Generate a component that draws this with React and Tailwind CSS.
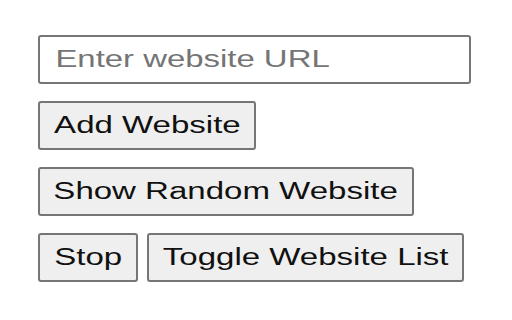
import React, { useState } from 'react';

const font = { fontFamily: '"Liberation Sans", Arial, sans-serif' };

// text in the popup is drawn wider than tall, so each label is stretched on x
const Label = ({ children }) => (
    <span className="inline-block scale-x-[1.405] origin-center whitespace-nowrap text-[23.5px] leading-none text-[#111]">
        {children}
    </span>
);

const Btn = ({ children, className }) => (
    <button
        className={`h-[49px] flex items-center justify-center bg-[#efefef] border-2 border-[#767676] rounded-[3px] ${className}`}
    >
        <Label>{children}</Label>
    </button>
);

const App = () => {
    const [url, setUrl] = useState('');

    return (
        <div className="w-[512px] h-[320px] bg-white pl-[38px] pt-[35px]" style={font}>
            <div className="flex flex-col gap-[17px]">
                {/* URL input */}
                <div className="w-[433px] h-[49px] flex items-center border-2 border-[#767676] rounded-[3px] bg-white">
                    <input
                        type="text"
                        value={url}
                        onChange={(e) => setUrl(e.target.value)}
                        placeholder="Enter website URL"
                        className="w-[298px] pl-[11px] bg-transparent outline-none text-[23.5px] leading-none text-black placeholder-[#757575] scale-x-[1.4] origin-left"
                        style={font}
                    />
                </div>

                <Btn className="w-[218px]">Add Website</Btn>
                <Btn className="w-[376px]">Show Random Website</Btn>

                <div className="flex gap-[9px]">
                    <Btn className="w-[100px]">Stop</Btn>
                    <Btn className="w-[317px]">Toggle Website List</Btn>
                </div>
            </div>
        </div>
    );
};

export default App;
